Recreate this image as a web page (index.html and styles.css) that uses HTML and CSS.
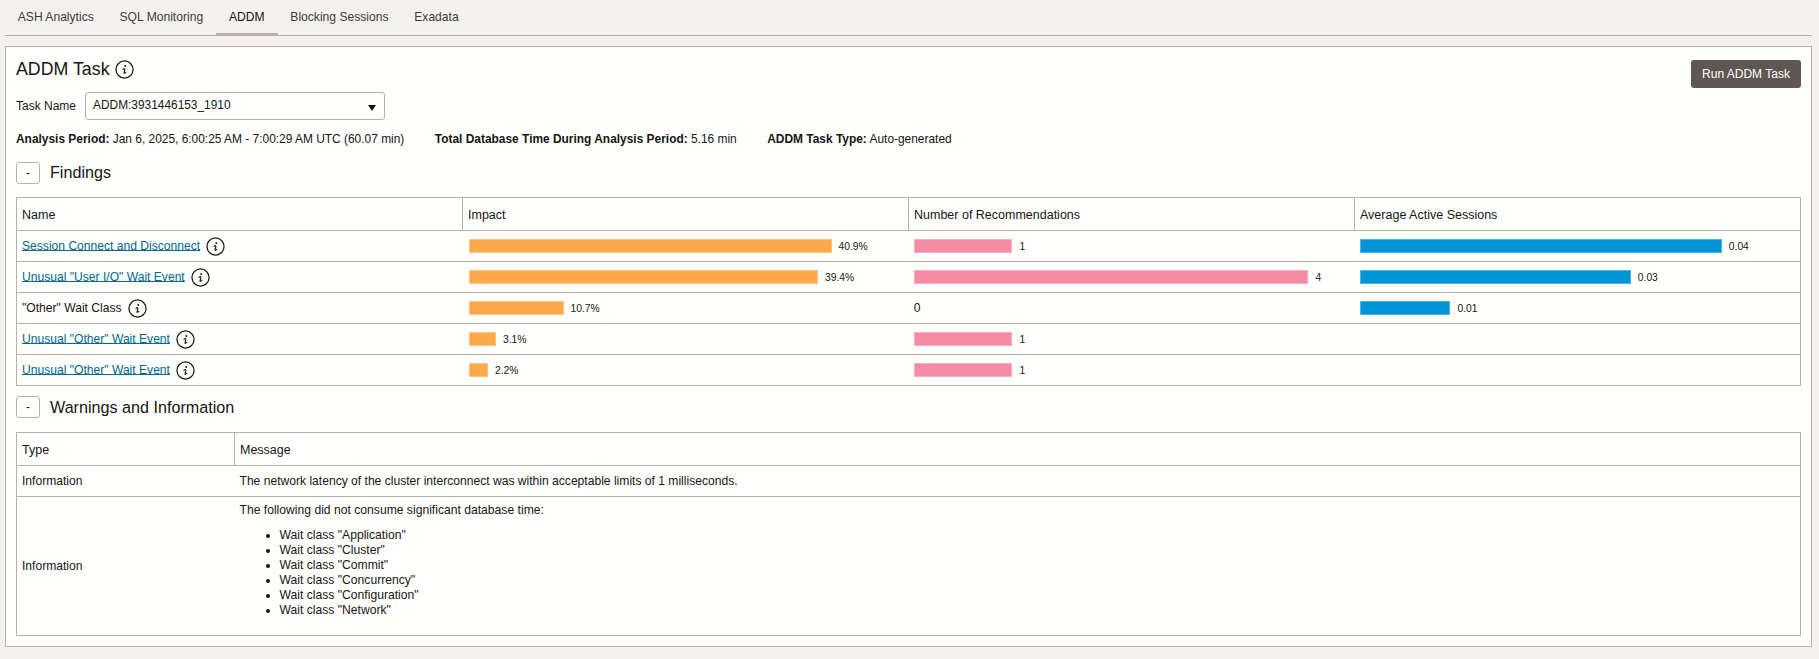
FILE: index.html
```html
<!DOCTYPE html>
<html lang="en">
<head>
<meta charset="utf-8">
<title>ADDM</title>
<link rel="stylesheet" href="styles.css">
</head>
<body>
<svg class="defs" width="0" height="0" aria-hidden="true">
  <symbol id="info" viewBox="0 0 20 20">
    <circle cx="10" cy="10" r="9" fill="none" stroke="currentColor" stroke-width="1.3"/>
    <circle cx="10.8" cy="6.3" r="1" fill="currentColor"/>
    <path d="M8.4 10c.6-.8 1.4-1.2 1.8-.9.4.3.2.9 0 1.7l-.6 2.2c-.2.8 0 1.1.5 1 .5-.1.9-.5 1.4-1.1" fill="none" stroke="currentColor" stroke-width="1.2" stroke-linecap="round"/>
  </symbol>
</svg>
<nav class="tabs">
  <a class="tab">ASH Analytics</a>
  <a class="tab">SQL Monitoring</a>
  <a class="tab active">ADDM</a>
  <a class="tab">Blocking Sessions</a>
  <a class="tab">Exadata</a>
</nav>
<main class="panel">
  <div class="head">
    <div class="head-left">
      <h1 class="title">ADDM Task <svg class="icon icon-lg"><use href="#info"/></svg></h1>
      <div class="task-row">
        <span class="task-label">Task Name</span>
        <div class="select"><span>ADDM:3931446153_1910</span><i class="caret"></i></div>
      </div>
    </div>
    <button class="run">Run ADDM Task</button>
  </div>
  <div class="meta">
    <span class="meta-item"><b>Analysis Period:</b> Jan 6, 2025, 6:00:25 AM - 7:00:29 AM UTC (60.07 min)</span>
    <span class="meta-item"><b>Total Database Time During Analysis Period:</b> 5.16 min</span>
    <span class="meta-item"><b>ADDM Task Type:</b> Auto-generated</span>
  </div>
  <div class="section section-find"><button class="toggle">-</button><h2>Findings</h2></div>
  <table class="grid findings">
    <thead>
      <tr><th>Name</th><th>Impact</th><th>Number of Recommendations</th><th>Average Active Sessions</th></tr>
    </thead>
    <tbody>
      <tr>
        <td><a class="link">Session Connect and Disconnect</a><svg class="icon"><use href="#info"/></svg></td>
        <td><div class="barcell"><i class="bar orange" style="width:363px"></i><span>40.9%</span></div></td>
        <td><div class="barcell"><i class="bar pink" style="width:98.6px"></i><span>1</span></div></td>
        <td><div class="barcell"><i class="bar blue" style="width:362px"></i><span>0.04</span></div></td>
      </tr>
      <tr>
        <td><a class="link">Unusual "User I/O" Wait Event</a><svg class="icon"><use href="#info"/></svg></td>
        <td><div class="barcell"><i class="bar orange" style="width:349.5px"></i><span>39.4%</span></div></td>
        <td><div class="barcell"><i class="bar pink" style="width:394.6px"></i><span>4</span></div></td>
        <td><div class="barcell"><i class="bar blue" style="width:271px"></i><span>0.03</span></div></td>
      </tr>
      <tr>
        <td>"Other" Wait Class<svg class="icon"><use href="#info"/></svg></td>
        <td><div class="barcell"><i class="bar orange" style="width:95px"></i><span>10.7%</span></div></td>
        <td>0</td>
        <td><div class="barcell"><i class="bar blue" style="width:90.6px"></i><span>0.01</span></div></td>
      </tr>
      <tr>
        <td><a class="link">Unusual "Other" Wait Event</a><svg class="icon"><use href="#info"/></svg></td>
        <td><div class="barcell"><i class="bar orange" style="width:27.5px"></i><span>3.1%</span></div></td>
        <td><div class="barcell"><i class="bar pink" style="width:98.6px"></i><span>1</span></div></td>
        <td></td>
      </tr>
      <tr>
        <td><a class="link">Unusual "Other" Wait Event</a><svg class="icon"><use href="#info"/></svg></td>
        <td><div class="barcell"><i class="bar orange" style="width:19.5px"></i><span>2.2%</span></div></td>
        <td><div class="barcell"><i class="bar pink" style="width:98.6px"></i><span>1</span></div></td>
        <td></td>
      </tr>
    </tbody>
  </table>
  <div class="section section-warn"><button class="toggle">-</button><h2>Warnings and Information</h2></div>
  <table class="grid warnings">
    <thead>
      <tr><th class="col-type">Type</th><th>Message</th></tr>
    </thead>
    <tbody>
      <tr><td>Information</td><td>The network latency of the cluster interconnect was within acceptable limits of 1 milliseconds.</td></tr>
      <tr>
        <td>Information</td>
        <td class="msg">
          <p>The following did not consume significant database time:</p>
          <ul>
            <li>Wait class "Application"</li>
            <li>Wait class "Cluster"</li>
            <li>Wait class "Commit"</li>
            <li>Wait class "Concurrency"</li>
            <li>Wait class "Configuration"</li>
            <li>Wait class "Network"</li>
          </ul>
        </td>
      </tr>
    </tbody>
  </table>
</main>
</body>
</html>
```

FILE: styles.css
```css
* { box-sizing: border-box; }
html, body { margin: 0; height: 100%; }
body {
  background: #f5f1ee;
  color: #161513;
  font-family: "Liberation Sans", Arial, sans-serif;
  font-size: 12px;
  line-height: 15px;
  padding: 0 7px 0 5px;
  overflow: hidden;
}
.defs { position: absolute; }
.tabs {
  display: flex;
  height: 36px;
  border-bottom: 1px solid #b8b0a9;
  margin-bottom: 10px;
}
.tab {
  height: 36px;
  padding: 10px 13px 0 12.8px;
  color: #3f3b37;
  font-size: 12.1px;
}
.tab.active { color: #161513; border-bottom: 3px solid #b8b0a9; }
.panel {
  background: #fffffd;
  border: 1px solid #b8b0a9;
  padding: 13px 10px 11px;
  height: 601px;
}
.head { display: flex; justify-content: space-between; align-items: flex-start; }
.title {
  display: flex;
  align-items: center;
  margin: -1px 0 0;
  font-size: 17.8px;
  font-weight: 400;
  line-height: 20px;
}
.icon { width: 19px; height: 19px; margin-left: 6px; flex: none; vertical-align: middle; color: #161513; }
.icon-lg { margin-left: 5px; }
.task-row { display: flex; align-items: center; margin-top: 13px; }
.task-label { margin-right: 9px; }
.select {
  width: 300px;
  height: 28px;
  border: 1px solid #b8b0a9;
  border-radius: 3px;
  padding: 5px 7px 0;
  display: flex;
  justify-content: space-between;
  background: #fffffd;
  font-size: 11.9px;
}
.caret {
  width: 0;
  height: 0;
  margin: 7px 1px 0 0;
  border-left: 4.5px solid transparent;
  border-right: 4.5px solid transparent;
  border-top: 6px solid #161513;
}
.run {
  background: #5f5751;
  color: #fff;
  border: 0;
  border-radius: 3px;
  width: 110px;
  height: 28px;
  font: 12px "Liberation Sans", Arial, sans-serif;
}
.meta { display: flex; gap: 30.5px; margin-top: 12px; font-size: 11.93px; }
.section { display: flex; align-items: center; height: 22px; }
.section-find { margin-top: 15px; }
.section-warn { margin-top: 10px; }
.section h2 { margin: 0 0 0 10px; font-size: 16.15px; font-weight: 400; line-height: 20px; }
.section-find h2 { margin-bottom: 2px; }
.toggle {
  width: 24px;
  height: 22px;
  padding: 0;
  background: #fffffd;
  border: 1px solid #b8b0a9;
  border-radius: 3px;
  color: #161513;
  font: 12px "Liberation Sans", Arial, sans-serif;
}
.grid {
  width: 100%;
  table-layout: fixed;
  border-collapse: collapse;
  border: 1px solid #b8b0a9;
  font-size: 12.1px;
}
.grid th, .grid td {
  border-top: 1px solid #b8b0a9;
  border-bottom: 1px solid #b8b0a9;
  padding: 0 5px;
  text-align: left;
  font-weight: 400;
}
.grid th { height: 33px; padding-top: 2px; color: #161513; border-right: 1px solid #b8b0a9; font-size: 12.5px; }
.grid td { height: 31px; }
.findings { margin-top: 13px; }
.warnings { margin-top: 14px; }
.col-type { width: 218px; }
.link { color: #00688c; text-decoration: underline; }
.barcell { display: flex; align-items: center; font-size: 10.3px; }
.findings td:nth-child(2) { padding-left: 6px; }
.findings td:nth-child(n+3) { padding-left: 5.3px; }
.bar { display: block; height: 14px; margin-right: 7px; border: 1px solid rgba(255,255,255,.3); }
.orange { background: #ffa94d; }
.pink { background: #f58ba5; }
.blue { background: #0095d6; }
.grid td.msg { padding-top: 6px; padding-bottom: 17px; font-size: 12.15px; }
.msg p { margin: 0 0 10px; }
.msg ul { margin: 0; padding-left: 40px; }
```
